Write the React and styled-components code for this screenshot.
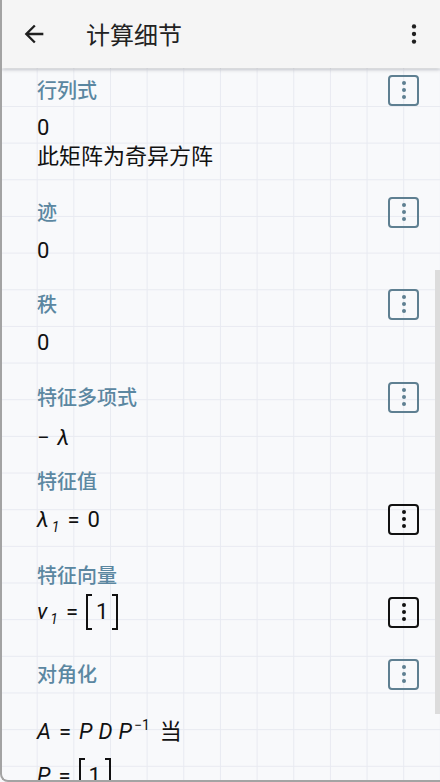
import React from 'react';
import styled, { createGlobalStyle } from 'styled-components';

const GlobalStyle = createGlobalStyle`
  html, body {
    margin: 0;
    padding: 0;
    background: #f8f9fb;
  }
  * {
    box-sizing: border-box;
  }
`;

const Frame = styled.div`
  position: relative;
  width: 440px;
  height: 782px;
  overflow: hidden;
  border-left: 2px solid #a3a3a3;
  border-bottom: 2px solid #a3a3a3;
  border-bottom-left-radius: 8px;
  background-color: #f8f9fb;
  background-image:
    linear-gradient(to right, #e8eaf1 1px, transparent 1px),
    linear-gradient(to bottom, #e8eaf1 1px, transparent 1px);
  background-size: 36.667px 36.667px;
  background-position: -2px -4px;
  font-family: Roboto, 'Noto Sans CJK SC', sans-serif;
  display: flex;
  flex-direction: column;
`;

const Header = styled.header`
  position: relative;
  z-index: 2;
  flex: 0 0 68px;
  display: flex;
  align-items: center;
  padding: 0 13px 0 18px;
  background: #f5f5f5;
  box-shadow: 0 2px 4px rgba(0, 0, 0, 0.16);
`;

const IconButton = styled.button`
  display: flex;
  align-items: center;
  justify-content: center;
  width: ${({ size }) => size}px;
  height: ${({ size }) => size}px;
  padding: 0;
  border: none;
  background: none;
  color: #1f1f1f;
`;

const HeaderTitle = styled.h1`
  flex: 1;
  margin: 0 0 0 38px;
  font-family: 'Noto Sans CJK SC', sans-serif;
  font-size: 24px;
  font-weight: 400;
  color: #222;
  line-height: 1;
`;

const Content = styled.main`
  flex: 1;
  display: flex;
  flex-direction: column;
  padding: 7px 21px 0 35px;
`;

const Section = styled.section`
  display: flex;
  flex-direction: column;
  flex-shrink: 0;
  margin-top: ${({ top }) => top}px;
`;

const TitleRow = styled.div`
  display: flex;
  align-items: center;
  justify-content: space-between;
  height: 30px;
  margin-bottom: ${({ below }) => below}px;
`;

const Title = styled.h2`
  margin: 0;
  font-family: 'Noto Sans CJK SC', sans-serif;
  font-size: 20px;
  font-weight: 500;
  line-height: 30px;
  color: #5b87a1;
`;

const Line = styled.div`
  display: flex;
  align-items: center;
  justify-content: space-between;
  flex-shrink: 0;
  height: ${({ h }) => h || 29}px;
  color: #111;
`;

const Text = styled.span`
  font-family: Roboto, 'Noto Sans CJK SC', sans-serif;
  font-size: 22px;
  line-height: 29px;
`;

const Math = styled.span`
  display: inline-block;
  white-space: nowrap;
  font-family: Roboto, 'Noto Sans CJK SC', sans-serif;
  font-size: 22px;
  line-height: 29px;
  color: #111;
`;

const Var = styled.i`
  font-style: italic;
  margin-right: ${({ gap }) => gap || 0}px;
`;

const Op = styled.span`
  margin: 0 ${({ gap }) => (gap === undefined ? 8 : gap)}px;
`;

const Sub = styled.sub`
  font-size: 14px;
  font-style: italic;
  vertical-align: -5px;
  line-height: 0;
  margin-left: 3px;
`;

const Sup = styled.sup`
  font-size: 14px;
  vertical-align: 9px;
  line-height: 0;
  margin-left: 2px;
`;

const Matrix = styled.span`
  display: inline-flex;
  align-items: center;
  vertical-align: middle;
  height: 36px;
  margin: -5px 0 -3px;
`;

const Bracket = styled.span`
  width: 6px;
  height: 36px;
  border: 2px solid #111;
  border-${({ side }) => (side === 'left' ? 'right' : 'left')}: none;
`;

const Cell = styled.span`
  padding: 0 4px;
  line-height: 1;
`;

const MenuButton = styled.button`
  display: flex;
  flex-direction: column;
  align-items: center;
  justify-content: center;
  flex-shrink: 0;
  gap: 3px;
  width: 31px;
  height: 31px;
  padding: 0;
  border: 2px solid ${({ dark }) => (dark ? '#111' : '#5e7f91')};
  border-radius: 4px;
  background: transparent;

  span {
    width: 4px;
    height: 4px;
    border-radius: 50%;
    background: ${({ dark }) => (dark ? '#111' : '#5e7f91')};
  }
`;

const ScrollThumb = styled.div`
  position: absolute;
  right: 0;
  top: 270px;
  width: 5px;
  height: 444px;
  background: #dcdcdc;
`;

const Dots = ({ dark }) => (
  <MenuButton dark={dark} type="button">
    <span />
    <span />
    <span />
  </MenuButton>
);

const App = () => (
  <>
    <GlobalStyle />
    <Frame>
      <Header>
        <IconButton size={28} type="button">
          <svg width="28" height="28" viewBox="0 0 24 24" fill="currentColor">
            <path d="M20 11H7.83l5.59-5.59L12 4l-8 8 8 8 1.41-1.41L7.83 13H20v-2z" />
          </svg>
        </IconButton>
        <HeaderTitle>计算细节</HeaderTitle>
        <IconButton size={26} type="button">
          <svg width="26" height="26" viewBox="0 0 24 24" fill="currentColor">
            <circle cx="12" cy="5" r="2" />
            <circle cx="12" cy="12" r="2" />
            <circle cx="12" cy="19" r="2" />
          </svg>
        </IconButton>
      </Header>

      <Content>
        <Section top={0}>
          <TitleRow below={8}>
            <Title>行列式</Title>
            <Dots />
          </TitleRow>
          <Line>
            <Text>0</Text>
          </Line>
          <Line>
            <Text>此矩阵为奇异方阵</Text>
          </Line>
        </Section>

        <Section top={26}>
          <TitleRow below={9}>
            <Title>迹</Title>
            <Dots />
          </TitleRow>
          <Line>
            <Text>0</Text>
          </Line>
        </Section>

        <Section top={24}>
          <TitleRow below={9}>
            <Title>秩</Title>
            <Dots />
          </TitleRow>
          <Line>
            <Text>0</Text>
          </Line>
        </Section>

        <Section top={25}>
          <TitleRow below={11}>
            <Title>特征多项式</Title>
            <Dots />
          </TitleRow>
          <Line>
            <Math>
              <Op gap={0}>−</Op>
              <Var style={{ marginLeft: 8 }}>λ</Var>
            </Math>
          </Line>
        </Section>

        <Section top={14}>
          <TitleRow below={8}>
            <Title>特征值</Title>
          </TitleRow>
          <Line h={30}>
            <Math>
              <Var>λ</Var>
              <Sub>1</Sub>
              <Op>=</Op>
              <span>0</span>
            </Math>
            <Dots dark />
          </Line>
        </Section>

        <Section top={26}>
          <TitleRow below={7}>
            <Title>特征向量</Title>
          </TitleRow>
          <Line h={30}>
            <Math>
              <Var>v</Var>
              <Sub>1</Sub>
              <Op>=</Op>
              <Matrix>
                <Bracket side="left" />
                <Cell>1</Cell>
                <Bracket side="right" />
              </Matrix>
            </Math>
            <Dots dark />
          </Line>
        </Section>

        <Section top={32}>
          <TitleRow below={27}>
            <Title>对角化</Title>
            <Dots />
          </TitleRow>
          <Line h={30}>
            <Math>
              <Var>A</Var>
              <Op>=</Op>
              <Var gap={6}>P</Var>
              <Var gap={6}>D</Var>
              <Var>P</Var>
              <Sup>−1</Sup>
              <Text style={{ marginLeft: 10 }}>当</Text>
            </Math>
          </Line>
          <Line h={40} style={{ marginTop: 10 }}>
            <Math>
              <Var>P</Var>
              <Op>=</Op>
              <Matrix>
                <Bracket side="left" />
                <Cell>1</Cell>
                <Bracket side="right" />
              </Matrix>
            </Math>
          </Line>
        </Section>
      </Content>

      <ScrollThumb />
    </Frame>
  </>
);

export default App;
